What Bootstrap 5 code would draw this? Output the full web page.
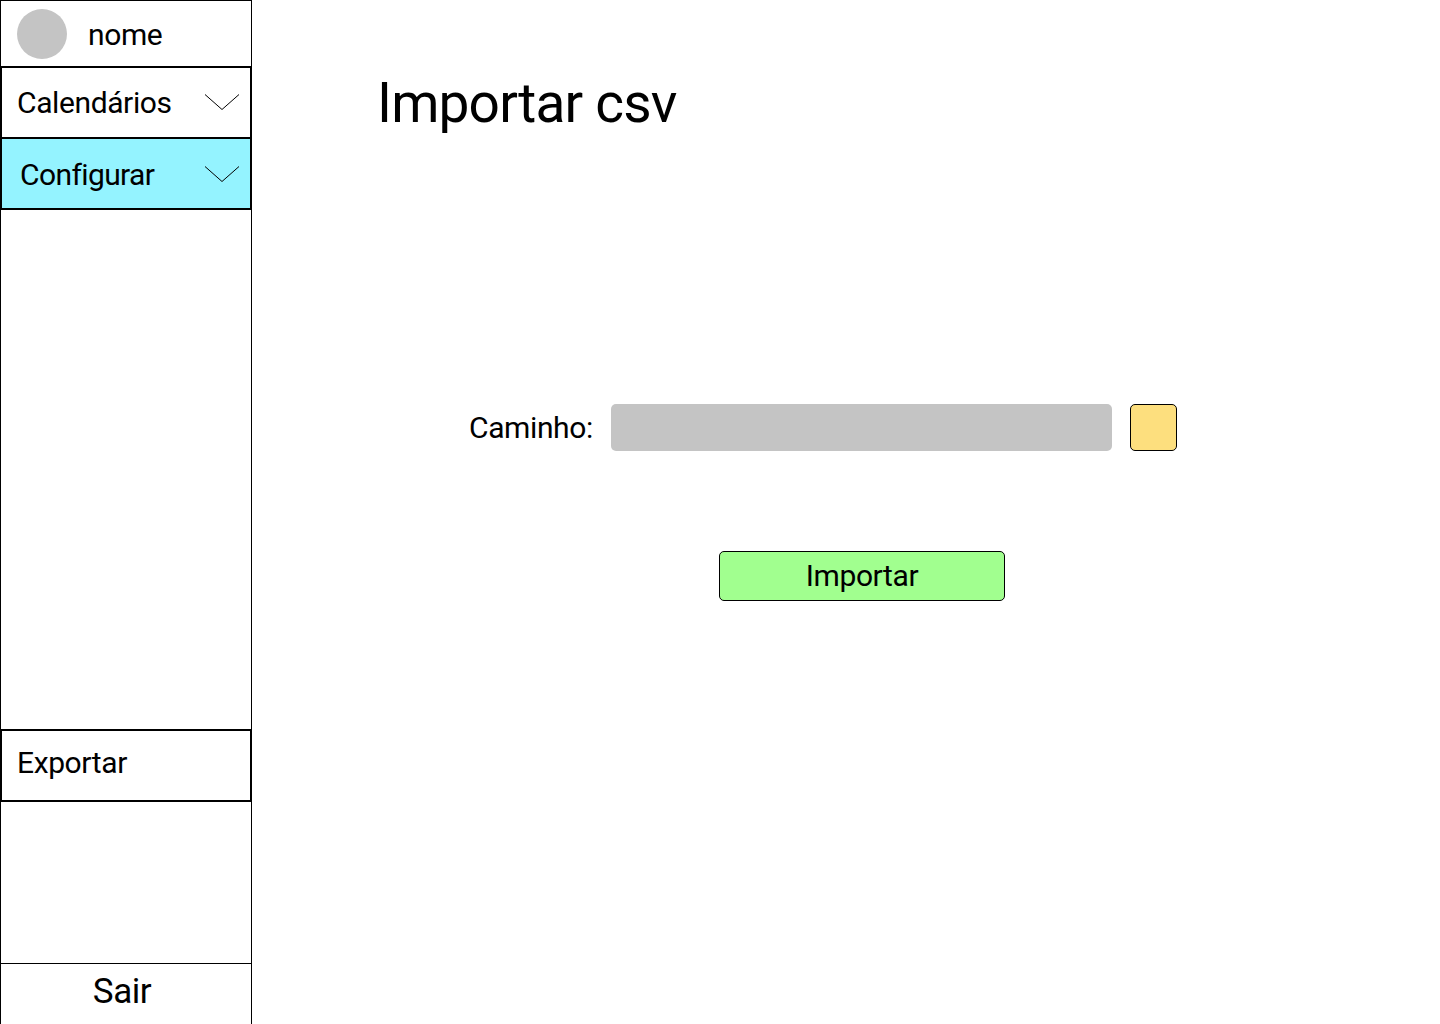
<!DOCTYPE html>
<html lang="pt">
<head>
  <meta charset="UTF-8">
  <meta name="viewport" content="width=device-width, initial-scale=1.0">
  <title>Importar csv</title>
  <link rel="stylesheet" href="https://cdn.jsdelivr.net/npm/bootstrap@5.3.0/dist/css/bootstrap.min.css">
  <style>
    html, body { height: 1024px; overflow: hidden; }
    body { font-family: Roboto, "Liberation Sans", sans-serif; color: #000; background: #fff; }
    .shell { height: 1024px; }
    .side-bar { width: 252px; flex: none; border: 1px solid #000; border-bottom: 0; }
    .user-row { height: 65px; padding-left: 16px; gap: 21px; font-size: 30px; letter-spacing: -.013em; }
    .user-row span { padding-top: 2px; }
    .user-pic { width: 50px; height: 50px; border-radius: 50%; background: #c4c4c4; }
    .side-item { height: 73px; margin: 0 -1px -2px; border: 2px solid #000; font-size: 30px; letter-spacing: -.013em; padding-left: 15px; padding-right: 11px; }
    .side-item svg { margin-bottom: 2px; }
    .side-item.active-item { background: #94f3ff; padding-left: 18px; letter-spacing: -.02em; }
    .side-item.active-item span { padding-top: 2px; }
    .side-item.active-item svg { margin-bottom: 0; }
    .side-item.export-item span { padding-bottom: 6px; }
    .side-gap-a { height: 521px; }
    .side-gap-b { height: 164px; border-bottom: 1px solid #000; }
    .side-foot { font-size: 35px; letter-spacing: -.013em; height: 60px; padding-right: 8px; padding-bottom: 4px; }
    .main-area { padding-left: 125px; }
    .page-title { font-size: 55px; font-weight: 400; line-height: 66px; margin: 70px 0 0; letter-spacing: -.015em; }
    .path-row { margin-top: 268px; margin-left: 92px; font-size: 30px; letter-spacing: -.013em; height: 47px; }
    .path-label { width: 142px; }
    .path-box { width: 501px; height: 47px; background: #c4c4c4; border-radius: 5px; }
    .pick-btn { width: 47px; height: 47px; margin-left: 18px; background: #fddf7e; border: 1px solid #000; border-radius: 5px; padding: 0; }
    .go-btn { width: 286px; height: 50px; margin: 100px 0 0 342px; background: #a1ff8f; border: 1px solid #000; border-radius: 5px; font-size: 30px; letter-spacing: -.013em; line-height: 1; padding: 0; color: #000; }
  </style>
</head>
<body>
  <div class="shell d-flex">
    <div class="side-bar d-flex flex-column">
      <div class="user-row d-flex align-items-center">
        <div class="user-pic"></div>
        <span>nome</span>
      </div>
      <div class="side-item d-flex align-items-center justify-content-between">
        <span>Calendários</span>
        <svg width="34" height="16" viewBox="0 0 34 16"><path d="M0 .5 17 15.5 34 .5" fill="none" stroke="#000" stroke-width="1"/></svg>
      </div>
      <div class="side-item active-item d-flex align-items-center justify-content-between">
        <span>Configurar</span>
        <svg width="34" height="16" viewBox="0 0 34 16"><path d="M0 .5 17 15.5 34 .5" fill="none" stroke="#000" stroke-width="1"/></svg>
      </div>
      <div class="side-gap-a"></div>
      <div class="side-item export-item d-flex align-items-center justify-content-between">
        <span>Exportar</span>
      </div>
      <div class="side-gap-b"></div>
      <div class="side-foot d-flex align-items-center justify-content-center">Sair</div>
    </div>
    <div class="main-area flex-grow-1">
      <h1 class="page-title">Importar csv</h1>
      <div class="path-row d-flex align-items-center">
        <label class="path-label">Caminho:</label>
        <div class="path-box"></div>
        <button class="pick-btn btn" type="button" aria-label="Escolher arquivo"></button>
      </div>
      <button class="go-btn btn d-block" type="button">Importar</button>
    </div>
  </div>
  <script src="https://cdn.jsdelivr.net/npm/bootstrap@5.3.0/dist/js/bootstrap.bundle.min.js"></script>
</body>
</html>
